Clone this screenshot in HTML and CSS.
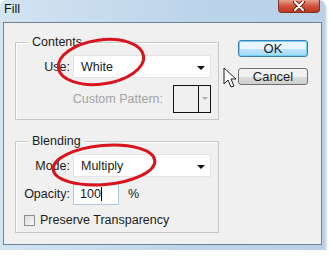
FILE: index.html
```html
<!DOCTYPE html>
<html lang="en">
<head>
    <meta charset="UTF-8">
    <title>Fill</title>
    <link rel="stylesheet" href="styles.css">
</head>
<body>
    <div class="window">
        <div class="titlebar">
            <span class="title">Fill</span>
            <div class="close">
                <svg width="14" height="10" viewBox="0 0 14 10">
                    <path d="M3 1 L11 9 M11 1 L3 9" stroke="#6b2418" stroke-width="4" stroke-linecap="round"/>
                    <path d="M3 1 L11 9 M11 1 L3 9" stroke="#fff" stroke-width="2" stroke-linecap="round"/>
                </svg>
            </div>
        </div>
        <div class="client">
            <div class="groups">
                <div class="group contents">
                    <span class="legend">Contents</span>
                    <div class="row">
                        <label class="lbl">Use:</label>
                        <div class="select">White<span class="arrow"></span></div>
                    </div>
                    <div class="row pattern">
                        <span class="disabled">Custom Pattern:</span>
                        <div class="swatch"><span class="cell"></span><span class="drop"></span></div>
                    </div>
                </div>
                <div class="group blending">
                    <span class="legend">Blending</span>
                    <div class="row">
                        <label class="lbl">Mode:</label>
                        <div class="select">Multiply<span class="arrow"></span></div>
                    </div>
                    <div class="row opacity">
                        <label class="lbl">Opacity:</label>
                        <div class="input">100<span class="caret"></span></div>
                        <span class="pct">%</span>
                    </div>
                    <div class="check">
                        <span class="box"></span>
                        <span>Preserve Transparency</span>
                    </div>
                </div>
            </div>
            <div class="buttons">
                <div class="btn ok">OK</div>
                <div class="btn">Cancel</div>
            </div>
        </div>

        <!-- annotations -->
        <svg class="marks" width="330" height="257" viewBox="0 0 330 257">
            <ellipse cx="101" cy="62" rx="43" ry="22" transform="rotate(-8 101 62)" fill="none" stroke="#d8141c" stroke-width="3"/>
            <ellipse cx="104" cy="165" rx="51" ry="19.5" transform="rotate(-5 104 165)" fill="none" stroke="#d8141c" stroke-width="3"/>
            <path d="M224 68 L224 84 L228 80 L231 87 L234 86 L231 79 L236 79 Z" fill="#fff" stroke="#222" stroke-width="1" stroke-linejoin="round"/>
        </svg>
    </div>
</body>
</html>
```
FILE: styles.css
```css
* {
    margin: 0;
    padding: 0;
    box-sizing: border-box;
}
body {
    background: #fff;
    font: 12.5px "Liberation Sans", Arial, sans-serif;
    color: #1b1b1b;
}
.window {
    position: relative;
    width: 325px;
    height: 250px;
    padding: 0 3px 5px;
    display: flex;
    flex-direction: column;
    background: linear-gradient(to right, #d3e4f2, #bcd4ea 60%, #bad2e9);
    border-radius: 6px 6px 0 0;
    box-shadow: 1px 2px 3px rgba(0,0,0,0.25);
}
.titlebar {
    height: 22px;
    display: flex;
    justify-content: space-between;
    align-items: flex-start;
}
.title {
    padding: 2px 0 0 1px;
    font-size: 12.5px;
    color: #111;
}
.close {
    width: 42px;
    height: 13px;
    margin-right: 2px;
    display: flex;
    align-items: center;
    justify-content: center;
    background: linear-gradient(#e9a08f, #d2533f 50%, #c03522);
    border: 1px solid #7d3326;
    border-top: none;
    border-radius: 0 0 4px 4px;
}
.client {
    flex: 1;
    display: flex;
    background: #f0f0f0;
    border: 1px solid #6f8294;
}
.groups {
    width: 204px;
    margin: 19px 0 0 11px;
}
.group {
    position: relative;
    border: 1px solid #c8c8c8;
    box-shadow: inset 1px 1px 0 #fff;
}
.legend {
    position: absolute;
    top: -8px;
    left: 12px;
    padding: 0 4px;
    background: #f0f0f0;
    line-height: 14px;
}
.contents {
    height: 78px;
    padding-top: 12px;
}
.blending {
    height: 92px;
    margin-top: 21px;
    padding-top: 12px;
}
.row {
    display: flex;
    align-items: center;
    gap: 3px;
}
.lbl {
    width: 54px;
    text-align: right;
}
.select {
    position: relative;
    width: 138px;
    height: 23px;
    padding-left: 7px;
    display: flex;
    align-items: center;
    background: #fff;
    border: 1px solid #e4e4e4;
}
.arrow {
    position: absolute;
    right: 5px;
    top: 10px;
    border-left: 4px solid transparent;
    border-right: 4px solid transparent;
    border-top: 4px solid #111;
}
.pattern {
    width: 195px;
    justify-content: flex-end;
    gap: 10px;
    margin-top: 7px;
}
.disabled {
    color: #a3a3a3;
}
.swatch {
    width: 38px;
    height: 28px;
    display: flex;
    border: 1px solid #111;
}
.cell {
    width: 25px;
    border-right: 1px solid #111;
}
.drop {
    flex: 1;
    display: flex;
    justify-content: center;
    padding-top: 11px;
}
.drop::before {
    content: "";
    border-left: 3px solid transparent;
    border-right: 3px solid transparent;
    border-top: 3px solid #aaa;
    height: 0;
}
.opacity {
    margin-top: 6px;
}
.input {
    width: 46px;
    height: 22px;
    padding-left: 6px;
    display: flex;
    align-items: center;
    background: #fff;
    border: 1px solid #a9c9e2;
}
.caret {
    width: 1px;
    height: 14px;
    background: #000;
}
.pct {
    margin-left: 6px;
}
.check {
    display: flex;
    align-items: center;
    gap: 5px;
    margin: 8px 0 0 8px;
}
.box {
    width: 11px;
    height: 11px;
    border: 1px solid #8e8f8f;
    background: linear-gradient(135deg, #dcdcdc, #f6f6f6);
}
.buttons {
    margin: 17px 0 0 19px;
    display: flex;
    flex-direction: column;
    gap: 11px;
}
.btn {
    width: 70px;
    height: 17px;
    display: flex;
    align-items: center;
    justify-content: center;
    border: 1px solid #707070;
    border-radius: 3px;
    background: linear-gradient(#f2f2f2 50%, #dddddd 50%, #cfcfcf);
    font-size: 13px;
}
.ok {
    border-color: #3c7fb1;
    background: linear-gradient(#eaf6fd 50%, #bee6fd 50%, #a7d9f5);
    box-shadow: inset 0 0 0 1px #6fd0f5;
}
.marks {
    position: absolute;
    top: 0;
    left: 0;
}
```
